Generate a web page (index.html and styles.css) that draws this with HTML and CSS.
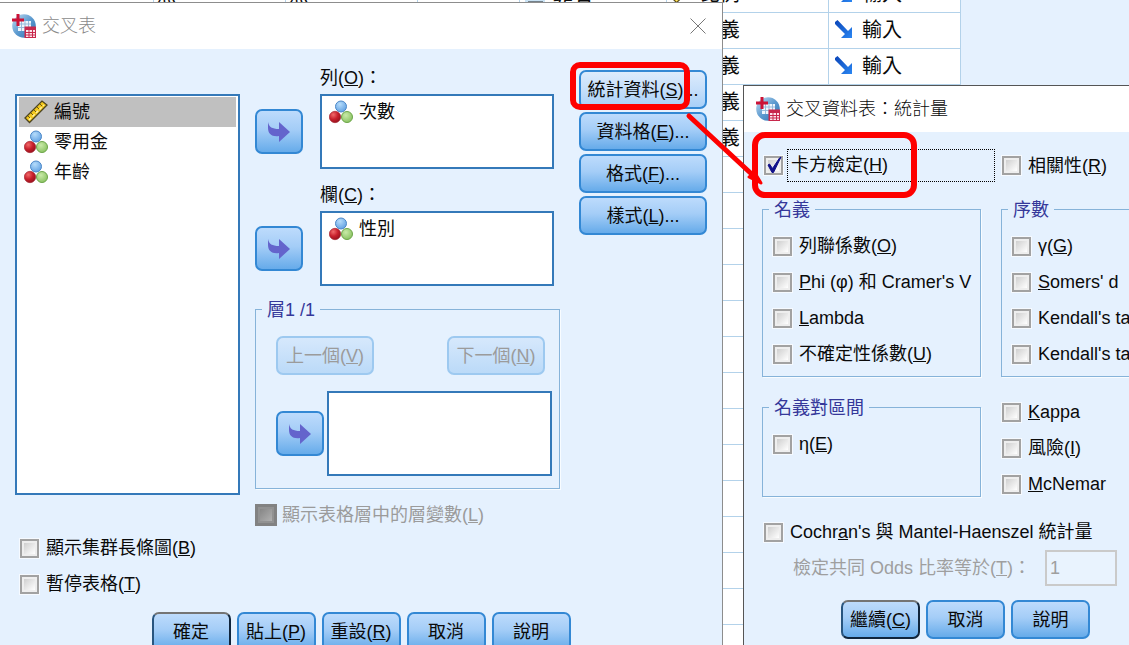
FILE: index.html
```html
<!DOCTYPE html>
<html lang="zh-Hant">
<head>
<meta charset="utf-8">
<title>交叉表</title>
<link rel="stylesheet" href="styles.css">
</head>
<body>
<svg class="defs" width="0" height="0" aria-hidden="true">
  <defs>
    <radialGradient id="gb" cx=".4" cy=".3" r=".8"><stop offset="0" stop-color="#b5dcfb"/><stop offset="1" stop-color="#5a9be0"/></radialGradient>
    <radialGradient id="gr" cx=".35" cy=".3" r=".8"><stop offset="0" stop-color="#f06a6a"/><stop offset=".5" stop-color="#c8202c"/><stop offset="1" stop-color="#8d0f1a"/></radialGradient>
    <radialGradient id="gg" cx=".4" cy=".35" r=".8"><stop offset="0" stop-color="#c9eaa8"/><stop offset="1" stop-color="#7fbb55"/></radialGradient>
    <linearGradient id="gs" x1="0" y1="0" x2="1" y2="1"><stop offset="0" stop-color="#c4ddf2"/><stop offset=".5" stop-color="#5d9bd0"/><stop offset="1" stop-color="#2e6fae"/></linearGradient>
    <linearGradient id="ga" x1="0" y1="0" x2="1" y2="1"><stop offset="0" stop-color="#0b45b8"/><stop offset="1" stop-color="#2a86f2"/></linearGradient>
    <symbol id="balls" viewBox="0 0 24 24">
      <circle cx="12" cy="6.500" r="5.500" fill="url(#gb)" stroke="#4d88c8"/>
      <circle cx="18" cy="17" r="5.500" fill="url(#gg)" stroke="#6da649"/>
      <circle cx="6" cy="17" r="5.700" fill="url(#gr)" stroke="#9c1a26" stroke-width=".6"/>
    </symbol>
    <symbol id="ruler" viewBox="0 0 24 24">
      <path d="M1 18 18 1l5 4L5.500 22.500z" fill="#f3c81c" stroke="#4d4420" stroke-width="1.300"/>
      <path d="m4 16 2 2m1-5 2 2m1-5 2 2m1-5 2 2m1-5 2 2" stroke="#6b5a12" stroke-width="1"/>
      <path d="m5 20 15-15" stroke="#fff0a0" stroke-width="1.500" stroke-dasharray="3 2"/>
    </symbol>
    <symbol id="app" viewBox="0 0 24 24">
      <circle cx="12" cy="12" r="11.800" fill="url(#gs)"/>
      <path d="M6 7h13v10H6z" fill="#eef5fc"/>
      <path d="M6 10h13M6 13.500h13M9.500 7v10M13 7v10M16.500 7v10" stroke="#8db4d8" stroke-width=".9"/>
      <path d="M12.500 12.500H24V24H12.500z" fill="#c8284c"/>
      <path d="M14 16h2.500v2H14zm3.500 0H20v2h-2.500zm3.500 0h2v2h-2zm-7 3h2.500v1.500H14zm3.500 0H20v1.500h-2.500zm3.500 0h2v1.500h-2zm-7 2.500h2.500V23H14zm3.500 0H20V23h-2.500zm3.500 0h2V23h-2z" fill="#fbe3ea"/>
      <path d="M4.500 0h3v4.500H12v3H7.500V12h-3V7.500H0v-3h4.500z" fill="#cc1236"/>
    </symbol>
    <symbol id="move" viewBox="0 0 22 20">
      <path d="M0 0c1 5 4 7 11 7V0l11 10-11 10v-6C4 15 0 12 0 6z" fill="#6464cc"/>
    </symbol>
    <symbol id="input" viewBox="0 0 20 20">
      <path d="M1 2 3.500 0 14 11l4-4v11H7l4-4L1 4z" fill="url(#ga)"/>
    </symbol>
    <symbol id="align" viewBox="0 0 20 20">
      <path d="M0 0h20v20H0z" fill="#c9e2f4"/>
      <path d="M3 3h15M8 8h10M3 13h15M3 18.500h15" stroke="#222" stroke-width="2"/>
    </symbol>
    <symbol id="close" viewBox="0 0 16 16"><path d="m.5.5 15 15m0-15-15 15" stroke="#777" fill="none"/></symbol>
  </defs>
</svg>

<main class="desktop">
  <table class="sheet">
    <colgroup><col class="c-lead"><col class="c-a"><col class="c-a"><col class="c-b"><col class="c-c"><col class="c-d"><col class="c-a"></colgroup>
    <tbody>
      <tr><td></td><td>無</td><td>無</td><td></td><td><span class="cell"><svg class="glyph"><use href="#align"/></svg>靠右</span></td><td><span class="cell"><svg class="glyph"><use href="#ruler"/></svg>比例</span></td><td><span class="cell"><svg class="glyph"><use href="#input"/></svg>輸入</span></td></tr>
      <tr><td></td><td></td><td></td><td></td><td></td><td><span class="cell"><svg class="glyph"><use href="#balls"/></svg>名義</span></td><td><span class="cell"><svg class="glyph"><use href="#input"/></svg>輸入</span></td></tr>
      <tr><td></td><td></td><td></td><td></td><td></td><td><span class="cell"><svg class="glyph"><use href="#balls"/></svg>名義</span></td><td><span class="cell"><svg class="glyph"><use href="#input"/></svg>輸入</span></td></tr>
      <tr><td></td><td></td><td></td><td></td><td></td><td><span class="cell"><svg class="glyph"><use href="#balls"/></svg>名義</span></td><td></td></tr>
      <tr><td></td><td></td><td></td><td></td><td></td><td><span class="cell"><svg class="glyph"><use href="#balls"/></svg>名義</span></td><td></td></tr>
      <tr><td colspan="7"></td></tr><tr><td colspan="7"></td></tr><tr><td colspan="7"></td></tr><tr><td colspan="7"></td></tr>
      <tr><td colspan="7"></td></tr><tr><td colspan="7"></td></tr><tr><td colspan="7"></td></tr><tr><td colspan="7"></td></tr>
      <tr><td colspan="7"></td></tr><tr><td colspan="7"></td></tr><tr><td colspan="7"></td></tr><tr><td colspan="7"></td></tr>
      <tr><td colspan="7"></td></tr><tr><td colspan="7"></td></tr>
    </tbody>
  </table>

  <section class="dialog crosstabs" aria-labelledby="t1">
    <header class="titlebar inactive">
      <svg class="appicon"><use href="#app"/></svg>
      <h1 id="t1">交叉表</h1>
      <button class="close" type="button" aria-label="關閉"><svg><use href="#close"/></svg></button>
    </header>
    <div class="columns">
      <div class="source">
        <ul class="listbox">
          <li class="selected"><svg class="glyph"><use href="#ruler"/></svg>編號</li>
          <li><svg class="glyph"><use href="#balls"/></svg>零用金</li>
          <li><svg class="glyph"><use href="#balls"/></svg>年齡</li>
        </ul>
      </div>
      <div class="targets">
        <div class="target">
          <span class="caption" id="rows">列(<u>O</u>)：</span>
          <button class="btn move" type="button" aria-label="移至列"><svg><use href="#move"/></svg></button>
          <ul class="listbox" aria-labelledby="rows"><li><svg class="glyph"><use href="#balls"/></svg>次數</li></ul>
        </div>
        <div class="target">
          <span class="caption" id="cols">欄(<u>C</u>)：</span>
          <button class="btn move" type="button" aria-label="移至欄"><svg><use href="#move"/></svg></button>
          <ul class="listbox" aria-labelledby="cols"><li><svg class="glyph"><use href="#balls"/></svg>性別</li></ul>
        </div>
        <fieldset class="group layer">
          <legend>層1 /1</legend>
          <div class="pager">
            <button class="btn" type="button" disabled>上一個(<u>V</u>)</button>
            <button class="btn" type="button" disabled>下一個(<u>N</u>)</button>
          </div>
          <div class="layerbox">
            <button class="btn move" type="button" aria-label="移至層"><svg><use href="#move"/></svg></button>
            <ul class="listbox" aria-label="層"></ul>
          </div>
        </fieldset>
        <label class="check off"><input type="checkbox" disabled><span>顯示表格層中的層變數(<u>L</u>)</span></label>
      </div>
      <div class="side">
        <button class="btn hot" type="button">統計資料(<u>S</u>)...</button>
        <button class="btn" type="button">資料格(<u>E</u>)...</button>
        <button class="btn" type="button">格式(<u>F</u>)...</button>
        <button class="btn" type="button">樣式(<u>L</u>)...</button>
      </div>
    </div>
    <div class="options">
      <label class="check"><input type="checkbox"><span>顯示集群長條圖(<u>B</u>)</span></label>
      <label class="check"><input type="checkbox"><span>暫停表格(<u>T</u>)</span></label>
    </div>
    <footer class="actions centered">
      <button class="btn default" type="button">確定</button>
      <button class="btn" type="button">貼上(<u>P</u>)</button>
      <button class="btn" type="button">重設(<u>R</u>)</button>
      <button class="btn" type="button">取消</button>
      <button class="btn" type="button">說明</button>
    </footer>
  </section>

  <section class="dialog stats" aria-labelledby="t2">
    <header class="titlebar">
      <svg class="appicon"><use href="#app"/></svg>
      <h2 id="t2">交叉資料表：統計量</h2>
    </header>
    <div class="statsbody">
      <div class="toprow">
        <label class="check focused"><span class="tickbox"><input type="checkbox" checked><svg viewBox="0 0 19 19"><path d="m4 9 1.500-1 3 4.500L15.500 2 17 1 9.500 16.500H8z" fill="#10108a" stroke="#10108a"/></svg></span><span class="focus">卡方檢定(<u>H</u>)</span></label>
        <label class="check"><input type="checkbox"><span>相關性(<u>R</u>)</span></label>
      </div>
      <div class="groups">
        <fieldset class="group">
          <legend>名義</legend>
          <label class="check"><input type="checkbox"><span>列聯係數(<u>O</u>)</span></label>
          <label class="check"><input type="checkbox"><span><u>P</u>hi (φ) 和 Cramer's V</span></label>
          <label class="check"><input type="checkbox"><span><u>L</u>ambda</span></label>
          <label class="check"><input type="checkbox"><span>不確定性係數(<u>U</u>)</span></label>
        </fieldset>
        <fieldset class="group">
          <legend>序數</legend>
          <label class="check"><input type="checkbox"><span>γ(<u>G</u>)</span></label>
          <label class="check"><input type="checkbox"><span><u>S</u>omers' d</span></label>
          <label class="check"><input type="checkbox"><span>Kendall's tau-b</span></label>
          <label class="check"><input type="checkbox"><span>Kendall's tau-c</span></label>
        </fieldset>
        <fieldset class="group interval">
          <legend>名義對區間</legend>
          <label class="check"><input type="checkbox"><span>η(<u>E</u>)</span></label>
        </fieldset>
        <div class="loose">
          <label class="check"><input type="checkbox"><span><u>K</u>appa</span></label>
          <label class="check"><input type="checkbox"><span>風險(<u>I</u>)</span></label>
          <label class="check"><input type="checkbox"><span><u>M</u>cNemar</span></label>
        </div>
      </div>
      <div class="cochran">
        <label class="check"><input type="checkbox"><span>Cochr<u>a</u>n's 與 Mantel-Haenszel 統計量</span></label>
        <div class="odds">
          <label for="odds">檢定共同 Odds 比率等於(<u>T</u>)：</label>
          <input id="odds" type="text" value="1" disabled>
        </div>
      </div>
    </div>
    <footer class="actions">
      <button class="btn default" type="button">繼續(<u>C</u>)</button>
      <button class="btn" type="button">取消</button>
      <button class="btn" type="button">說明</button>
    </footer>
  </section>

  <svg class="markup" width="930" height="210" fill="none" stroke="#fe0000" aria-hidden="true">
    <rect x="573" y="65" width="114" height="42" rx="7" stroke-width="6"/>
    <rect x="755" y="135" width="159" height="60" rx="10" stroke-width="6"/>
    <path d="m689 116 68 63" stroke-width="5" stroke-linecap="round"/>
    <path d="m749 177 6-4 6 10z" fill="#fe0000" stroke-width="3" stroke-linejoin="round"/>
  </svg>
</main>
</body>
</html>
```
FILE: styles.css
```css
* {
  box-sizing: border-box;
}

body {
  margin: 0;
  overflow: hidden;
  background: #e5f1fe;
  color: #0a0a0a;
  font: 18px/24px "Liberation Sans", "Noto Sans CJK TC", sans-serif;
}

button,
input {
  font: inherit;
  color: inherit;
}

.defs {
  position: absolute;
}

.desktop {
  position: relative;
  height: 100vh;
  overflow: hidden;
}

/* data sheet behind the dialogs */
.sheet {
  width: 961px;
  margin-top: -24px;
  border-collapse: collapse;
  table-layout: fixed;
  background: #fff;
  font-size: 20px;
}

.c-lead { width: 153px; }
.c-a { width: 132px; }
.c-b { width: 102px; }
.c-c { width: 147px; }
.c-d { width: 162px; }

.sheet td {
  height: 36px;
  padding: 0 3px;
  border: solid #b3d2ea;
  border-width: 0 1px 1px 0;
  white-space: nowrap;
}

.cell {
  display: flex;
  align-items: center;
  gap: 8px;
  padding-left: 2px;
}

.glyph {
  flex: none;
  width: 24px;
  height: 24px;
}

.cell .glyph {
  width: 20px;
  height: 20px;
}

/* dialogs */
.dialog {
  position: absolute;
  background: #e5f1fe;
  white-space: nowrap;
}

.crosstabs {
  top: 2px;
  left: 0;
  border: solid #8d8d8d;
  border-width: 1px 1px 0 0;
}

.stats {
  top: 85px;
  left: 743px;
  right: 0;
  bottom: 0;
  overflow: hidden;
  border: solid #555;
  border-width: 1px 0 0 1px;
}

.titlebar {
  display: flex;
  align-items: center;
  gap: 6px;
  height: 46px;
  padding: 0 16px 0 12px;
  background: #fff;
}

.titlebar h1,
.titlebar h2 {
  margin: 0;
  font-size: 18px;
  font-weight: 300;
}

.inactive h1 {
  color: #8a8a8a;
}

.appicon {
  width: 24px;
  height: 24px;
}

.close {
  display: flex;
  margin-left: auto;
  padding: 0;
  border: 0;
  background: none;
}

.close svg {
  width: 16px;
  height: 16px;
}

/* buttons */
.btn {
  height: 39px;
  padding: 0;
  border: 2px solid #3388d4;
  border-radius: 7px;
  background: linear-gradient(#bddbfc, #a4cdf7 45%, #66abea);
}

.btn.hot {
  background: linear-gradient(#dcebfc, #c6dffa 50%, #a8d0f8);
}

.btn.default {
  border-color: #747474 #10253c #10253c #28557f;
}

.btn:disabled {
  border-color: #9dc9f0;
  background: linear-gradient(#d6e8fc, #bbdaf8);
  color: #9b9b9b;
}

.btn.move {
  display: grid;
  place-items: center;
  width: 48px;
  height: 45px;
}

.btn.move svg {
  width: 22px;
  height: 20px;
}

.listbox {
  margin: 0;
  padding: 1px 2px;
  border: 2px solid #3479b9;
  background: #fff;
  list-style: none;
}

.listbox li {
  display: flex;
  align-items: center;
  gap: 6px;
  height: 30px;
  padding-left: 5px;
}

.listbox .selected {
  background: #c0c0c0;
}

/* main dialog */
.columns {
  display: grid;
  grid-template-columns: 225px 305px 128px;
  column-gap: 15px;
  padding: 17px 19px 0 15px;
}

.source {
  display: grid;
  padding: 28px 0 35px;
}

.target {
  display: grid;
  grid-template-columns: 48px 1fr;
  gap: 4px 17px;
  align-items: center;
  margin-bottom: 14px;
  padding-right: 6px;
}

.caption {
  grid-column: 2;
}

.target .listbox {
  height: 75px;
}

.group {
  min-width: 0;
  margin: 0;
  padding: 8px 6px 4px;
  border: 1px solid #86b3d9;
  box-shadow: 1px 1px 0 #f8fcff;
}

.group legend {
  height: 22px;
  padding: 0 5px;
  color: #35389a;
  line-height: 24px;
}

.layer {
  margin-top: -2px;
  padding: 16px 7px 12px 6px;
}

.pager {
  display: flex;
  justify-content: space-between;
  padding: 0 7px 16px 14px;
}

.pager .btn {
  width: 98px;
}

.layerbox {
  display: flex;
  align-items: center;
  gap: 3px;
  padding-left: 14px;
}

.layerbox .listbox {
  flex: 1;
  height: 85px;
}

.side {
  display: flex;
  flex-direction: column;
  gap: 3px;
  margin-left: 4px;
  margin-right: -4px;
  padding-top: 4px;
}

.options {
  padding: 0 20px;
}

.actions {
  display: flex;
  gap: 6px;
  padding: 14px 0 6px 97px;
}

.actions.centered {
  justify-content: center;
  padding: 10px 0 6px;
}

.actions .btn {
  width: 79px;
}

/* check boxes */
.check {
  display: flex;
  align-items: center;
  gap: 7px;
  height: 36px;
}

.check input {
  flex: none;
  width: 19px;
  height: 19px;
  margin: 0;
  padding: 2px;
  border: 2px solid #a2a2a2;
  outline: 1px solid #f6faff;
  background: linear-gradient(135deg, #cfcfcf, #fff) content-box, #eee;
  appearance: none;
}

.check.off {
  gap: 5px;
  height: 31px;
  margin-top: 10px;
  color: #9b9b9b;
}

.check.off input {
  width: 22px;
  height: 22px;
  border: 3px solid #828282;
  outline: 0;
  background: linear-gradient(135deg, #868686, #b0b0b0) content-box, #929292;
}

/* statistics dialog */
.statsbody {
  padding: 17px 0 0 18px;
}

.toprow {
  display: flex;
  gap: 7px;
  padding-left: 2px;
}

.toprow .check {
  height: 33px;
}

.toprow .focused {
  gap: 4px;
}

.tickbox {
  display: flex;
  position: relative;
}

.tickbox svg {
  position: absolute;
  inset: 0;
}

.focus {
  width: 208px;
  height: 33px;
  padding-left: 3px;
  border: 1px dotted #000;
  line-height: 31px;
}

.groups {
  display: grid;
  grid-template-columns: 219px minmax(180px, 1fr);
  gap: 17px 20px;
  padding-top: 16px;
}

.groups .check {
  padding-left: 4px;
}

.interval {
  margin-top: 2px;
  padding-bottom: 34px;
}

.loose {
  margin-bottom: -5px;
}

.loose .check {
  padding-left: 1px;
}

.cochran {
  padding: 17px 0 0 2px;
}

.odds {
  display: flex;
  align-items: center;
  gap: 14px;
  padding-left: 29px;
  color: #9f9f9f;
}

.odds input {
  width: 72px;
  height: 36px;
  padding: 0 3px;
  border: 2px solid #cacaca;
  background: #e9f3fe;
}

/* hand-drawn highlights over both dialogs */
.markup {
  position: absolute;
  top: 0;
  left: 0;
  pointer-events: none;
}
```
